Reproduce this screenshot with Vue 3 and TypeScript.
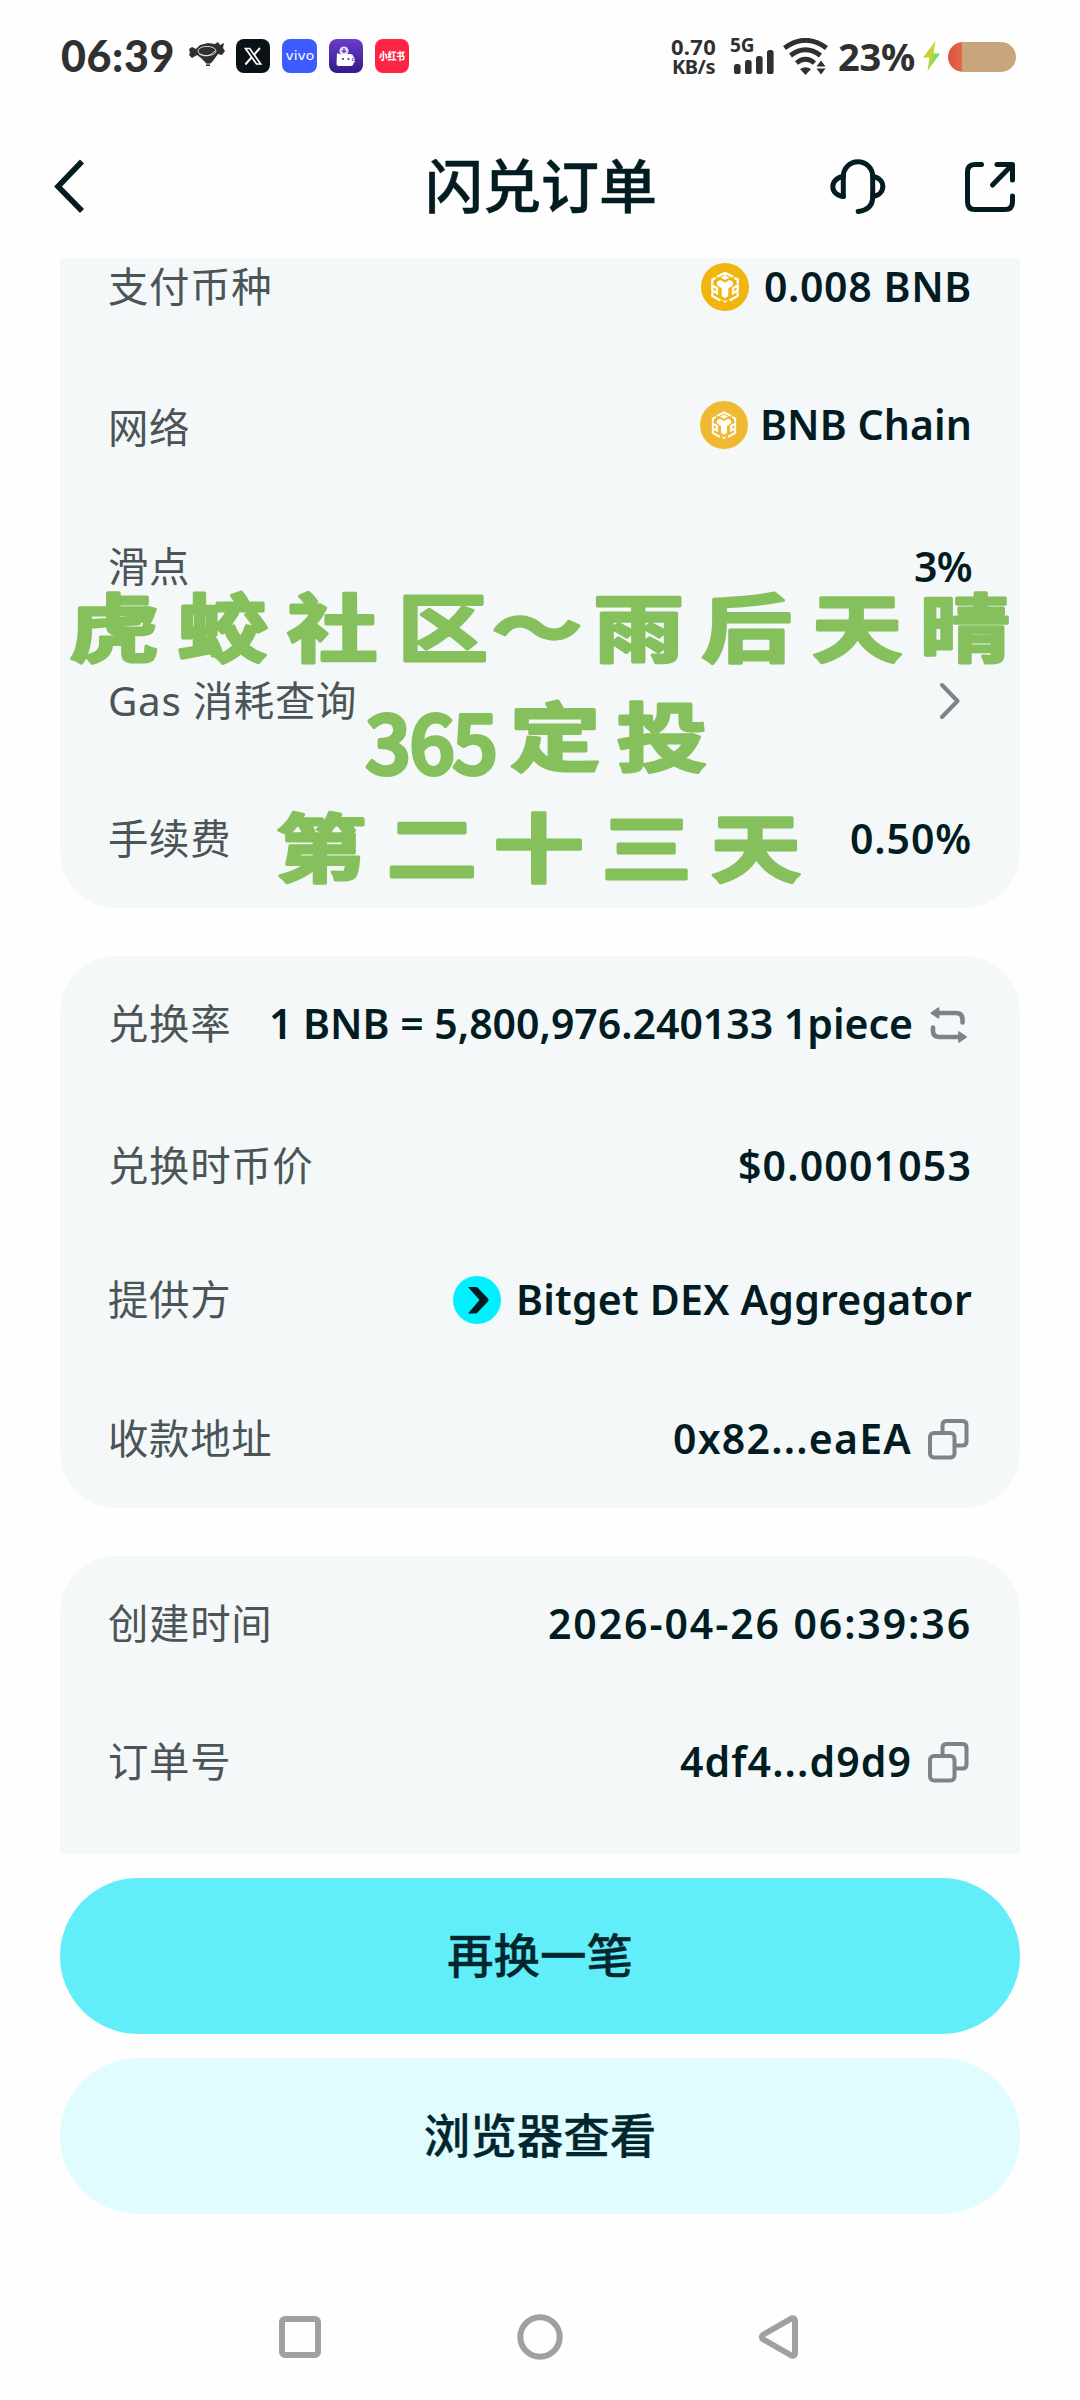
<script setup lang="ts">
import type { Directive } from 'vue'

interface Row {
  label: string
  value?: string
  width?: number
  lead?: 'bnb' | 'chain' | 'bitget'
  tail?: 'swap' | 'copy' | 'arrow'
}

const cards: Row[][] = [
  [
    { label: '支付币种', value: '0.008 BNB', width: 208, lead: 'bnb' },
    { label: '网络', value: 'BNB Chain', width: 212, lead: 'chain' },
    { label: '滑点', value: '3%', width: 58 },
    { label: 'Gas 消耗查询', tail: 'arrow' },
    { label: '手续费', value: '0.50%', width: 122 },
  ],
  [
    { label: '兑换率', value: '1 BNB = 5,800,976.240133 1piece', width: 644, tail: 'swap' },
    { label: '兑换时币价', value: '$0.0001053', width: 234 },
    { label: '提供方', value: 'Bitget DEX Aggregator', width: 456, lead: 'bitget' },
    { label: '收款地址', value: '0x82...eaEA', width: 239, tail: 'copy' },
  ],
  [
    { label: '创建时间', value: '2026-04-26 06:39:36', width: 424 },
    { label: '订单号', value: '4df4...d9d9', width: 232, tail: 'copy' },
  ],
]

// Tracks a text run so that its advance equals the given width.
const vTrack: Directive<HTMLElement, number | undefined> = {
  mounted(el, { value }) {
    if (!value) return
    const count = (el.textContent ?? '').trim().length
    const natural = el.getBoundingClientRect().width
    el.style.letterSpacing = `${((value - natural) / count).toFixed(3)}px`
  },
}

const bars = [
  { x: 0, h: 10 },
  { x: 11, h: 14 },
  { x: 22, h: 18 },
  { x: 33, h: 24 },
]
</script>

<template>
  <div class="screen">
    <header class="status">
      <span v-track="114" class="clock">06:39</span>
      <svg class="bird" width="36" height="28" viewBox="0 0 36 28">
        <path d="M0 7l3-2 4 2 4-4 8-2 7 1 3-2 2 3 4-2-1 5 2 3-3 4-4-1-5 7-3 3v2h-4v-3l-5-5-4-3-5 3-3-3 1-2z" fill="#303030" />
        <ellipse cx="18" cy="9" rx="9" ry="4.600" fill="none" stroke="#fefefe" stroke-width=".8" />
        <path d="M10 12q9 5 16-3M17 22h5" fill="none" stroke="#fefefe" stroke-width=".8" />
      </svg>
      <div class="app x-app">
        <svg width="34" height="34" viewBox="0 0 34 34" fill="none" stroke="#fff">
          <path d="M9.500 9.500h4.200l11 15.500h-4.200z" stroke-width="1.700" />
          <path d="M24 9L18 15.800M15.500 18.500L9.300 25.500" stroke-width="1.900" />
        </svg>
      </div>
      <div class="app vivo"><span>vivo</span></div>
      <div class="app wallet">
        <svg width="34" height="34" viewBox="0 0 34 34">
          <circle cx="15" cy="12" r="4.600" fill="#e4d8ff" />
          <path d="M15 9v4m-2-1.500l2 2 2-2" fill="none" stroke="#5a35b4" stroke-width="1.200" />
          <path d="M8 14q2 1.500 5 1h8q3 0 3.500 3l1.500 1v4l-1.500 1q0 3-3 3H9.500q-2 0-2-2z" fill="#fff" />
          <circle cx="14" cy="20" r="1" fill="#4526a0" /><circle cx="19.500" cy="20" r="1" fill="#4526a0" />
          <circle cx="24.500" cy="20.500" r="1.300" fill="none" stroke="#4526a0" stroke-width=".8" />
        </svg>
      </div>
      <div class="app red"><span>小红书</span></div>

      <div class="rate"><span v-track="45">0.70</span><span v-track="43">KB/s</span></div>
      <div class="signal">
        <span>5G</span>
        <svg width="40" height="25" viewBox="0 0 40 25">
          <rect v-for="b in bars" :key="b.x" :x="b.x" :y="25 - b.h" width="6.600" :height="b.h" rx="2.600" fill="#303030" />
        </svg>
      </div>
      <svg class="wifi" width="46" height="37" viewBox="0 0 46 37">
        <g fill="none" stroke="#303030" stroke-width="4.800">
          <path d="M1.500 10Q22.500-5.500 43.500 10" />
          <path d="M7.500 17.500Q22.500 6 37.500 17.500" />
          <path d="M13.500 25Q22.500 17.500 31.500 25" />
        </g>
        <path d="M17 31q5.500-3.600 11 0l-5.500 6zM33.500 28.500l4.500-6 4.500 6zM33.500 30.500h9l-4.500 6z" fill="#303030" />
      </svg>
      <span v-track="77" class="percent">23%</span>
      <svg class="bolt" width="17" height="30" viewBox="0 0 17 30">
        <defs>
          <linearGradient id="bolt" x1="0" y1="0" x2="1" y2=".6">
            <stop offset="0" stop-color="#e8b23a" /><stop offset=".5" stop-color="#c9d62f" /><stop offset="1" stop-color="#3fe08a" />
          </linearGradient>
        </defs>
        <path d="M12.500 0L0 16.500h6.500L4.500 30 17 12.500h-6.500z" fill="url(#bolt)" />
      </svg>
      <div class="battery"></div>
    </header>

    <nav class="bar">
      <svg class="back" width="32" height="54" viewBox="0 0 32 54" fill="none" stroke="#021c22" stroke-width="5.600">
        <path d="M29 2.500L5 27.500 29 52" />
      </svg>
      <h1 v-track="232">闪兑订单</h1>
      <svg class="headset" width="56" height="56" viewBox="0 0 56 56" fill="none" stroke="#021c22" stroke-width="5" stroke-linecap="round" stroke-linejoin="round">
        <path d="M13.300 37.500V17.500a14.700 14.700 0 0 1 29.400 0V38q0 12.500-14.500 14.500" />
        <path d="M13.300 17.500C-.7 19.500-.7 36 13.300 37.500M42.700 17.500c13.500 2 13.500 18 0 20" />
      </svg>
      <svg class="share" width="52" height="52" viewBox="0 0 52 52" fill="none" stroke="#021c22" stroke-width="5" stroke-linecap="round" stroke-linejoin="round">
        <path d="M17.500 3.500H11Q3.500 3.500 3.500 11v30q0 7.500 7.500 7.500h30q7.500 0 7.500-7.500v-6M33 3.500h15.500V19M47.500 4.500L28.500 24" />
      </svg>
    </nav>

    <main class="content">
      <section v-for="(rows, i) in cards" :key="i" class="card" :class="`card-${i + 1}`">
        <div v-for="row in rows" :key="row.label" class="row">
          <span class="label">{{ row.label }}</span>
          <div class="value">
            <svg v-if="row.lead === 'bnb' || row.lead === 'chain'" class="coin" :class="row.lead" width="48" height="48" viewBox="0 0 48 48">
              <circle cx="24" cy="24" r="24" :fill="row.lead === 'bnb' ? '#f0b50f' : '#f0b932'" />
              <g :transform="row.lead === 'bnb' ? 'translate(24 24)' : 'translate(24 24) scale(.88)'">
                <g fill="none" stroke="#fff" stroke-width="2.300">
                  <path d="M-8-10.300L0-14.300 8-10.300M-12.700-3.500v-3.800l3.400-2M12.700-3.500v-3.800l-3.400-2" />
                  <path d="M-12.700 5.500v3.400L-4.500 13.400M12.700 5.500v3.400L4.500 13.400M-12.700-1.500l4.700 2.700v5l-4.700-2.700zM12.700-1.500l-4.700 2.700v5l4.700-2.700z" />
                </g>
                <path d="M-4.500-9.500L0-12l4.500 2.500L0-7zM-8-5l3.200-2L0-4.500 4.800-7 8-5V-1.800L3.300 1.200v8L0 11l-3.300-1.800v-8L-8-1.800zM-3.200 13L0 14l3.200-1L0 16z" fill="#fff" />
              </g>
            </svg>
            <svg v-if="row.lead === 'bitget'" class="coin bitget" width="48" height="48" viewBox="0 0 48 48">
              <circle cx="24" cy="24" r="24" fill="#00f0ff" />
              <path d="M15 11h7.500q1.500 0 2.500 1l10 10.500q1.300 1.500 0 3L25 36q-1 1.500-2.500 1.500H15L26.500 24z" fill="#021c22" />
            </svg>
            <span v-if="row.value" v-track="row.width" class="text">{{ row.value }}</span>
            <svg v-if="row.tail === 'swap'" class="swap" width="40" height="38" viewBox="0 0 40 38">
              <path d="M8 7h20q6.500 0 6.500 6.500v3M31 31H11.500Q5 31 5 25v-3.500" fill="none" stroke="#7b8486" stroke-width="4.600" stroke-linecap="round" />
              <path d="M3 6.200L10 1.500q1.400-.6 1.400 1v9q0 1.600-1.400 1L3 7.800q-1-.8 0-1.600zM38.500 30.200l-7-4.700q-1.400-.6-1.400 1v9q0 1.600 1.400 1l7-4.700q1-.8 0-1.600z" fill="#7b8486" />
            </svg>
            <svg v-if="row.tail === 'copy'" class="copy" width="41" height="41" viewBox="0 0 41 41" fill="none" stroke="#7b8486" stroke-width="4">
              <path d="M14.500 13.500V6q0-4 4-4H34.500q4 0 4 4v16.500q0 4-4 4H28" />
              <rect x="2" y="14" width="24.500" height="24.500" rx="4" />
            </svg>
            <svg v-if="row.tail === 'arrow'" class="arrow" width="20" height="38" viewBox="0 0 20 38" fill="none" stroke="#7b8486" stroke-width="4" stroke-linecap="round" stroke-linejoin="round">
              <path d="M2 3l15.500 16L2 35" />
            </svg>
          </div>
        </div>
      </section>

      <svg class="stamp" width="960" height="360" viewBox="60 550 960 360">
        <g transform="scale(1.22 1)">
          <text y="656" x="93.500 182.500 272.500 363 440 523.500 612 702.500 791">虎蛟社区～雨后天晴</text>
          <text y="765" x="455 542.500">定投</text>
          <text y="876" x="263 354 441.500 530 619.500">第二十三天</text>
        </g>
        <text y="774" class="digits" x="388 432 475">365</text>
      </svg>
    </main>

    <footer class="actions">
      <button class="primary"><span>再换一笔</span></button>
      <button class="secondary"><span>浏览器查看</span></button>
    </footer>

    <div class="system">
      <svg width="48" height="48" viewBox="0 0 48 48"><rect x="6" y="6" width="36" height="36" rx="3" /></svg>
      <svg width="48" height="48" viewBox="0 0 48 48"><circle cx="24" cy="24" r="19.700" /></svg>
      <svg width="48" height="48" viewBox="0 0 48 48"><path d="M7.500 21.500L35.500 5.500Q39 4.500 39 8v32q0 3.500-3.500 2.500L7.500 26.500q-3.500-2.500 0-5z" /></svg>
    </div>
  </div>
</template>

<style>
body {
  background: #fefefe;
}
</style>

<style scoped>
.screen {
  width: 1080px;
  height: 2400px;
  overflow: hidden;
  display: flex;
  flex-direction: column;
  background: #fefefe;
  color: #021c22;
  font-family: 'Noto Sans', 'Noto Sans CJK SC', sans-serif;
}
svg {
  display: block;
  flex: none;
}
.status {
  height: 112px;
  display: flex;
  align-items: center;
  color: #303030;
  white-space: nowrap;
}
.clock {
  margin-left: 61px;
  font: 900 43px/50px Lato, sans-serif;
}
.bird {
  margin-left: 14px;
}
.app {
  width: 34px;
  height: 34px;
  margin-left: 12px;
  border-radius: 8px;
  display: flex;
  align-items: center;
  justify-content: center;
  overflow: hidden;
  color: #fff;
}
.bird + .app {
  margin-left: 11px;
}
.x-app {
  background: #0b1216;
}
.vivo {
  width: 35px;
  background: #3d5bff;
  font: 500 11.5px/20px 'DejaVu Sans', sans-serif;
}
.vivo span {
  transform: scaleX(1.2);
}
.wallet {
  background: linear-gradient(#6a3cc8, #35198a);
}
.red {
  background: #ff2442;
  font: 900 10px/14px 'Noto Sans CJK SC', sans-serif;
}
.red span {
  transform: scaleX(0.87);
}
.rate {
  margin-left: auto;
  width: 45px;
  display: flex;
  flex-direction: column;
  align-items: center;
  font-weight: 700;
}
.rate span {
  font-size: 22px;
  line-height: 21px;
}
.rate span + span {
  font-size: 20px;
  line-height: 20px;
}
.signal {
  width: 44px;
  height: 38px;
  margin-left: 14px;
  display: flex;
  flex-direction: column;
}
.signal span {
  margin-top: 1px;
  font-size: 19px;
  font-weight: 700;
  line-height: 14px;
}
.signal svg {
  margin: -3px 0 0 4px;
}
.wifi {
  margin-left: 9px;
}
.percent {
  margin-left: 9px;
  font-size: 38px;
  font-weight: 700;
  line-height: 50px;
}
.bolt {
  margin-left: 8px;
}
.battery {
  width: 68px;
  height: 30px;
  margin: 2px 64px 0 8px;
  border-radius: 15px;
  background: linear-gradient(90deg, #dd5040 0, #e46a48 14px, #c8a57c 14px);
}
.bar {
  height: 146px;
  display: flex;
  align-items: center;
}
.back {
  margin: 2px 0 0 53px;
}
h1 {
  margin: 1px 0 0 340px;
  font: 500 58px/80px 'Noto Sans', 'Noto Sans CJK SC', sans-serif;
  -webkit-text-stroke: 0.5px #021c22;
  white-space: nowrap;
}
.headset {
  margin: 4px 0 0 auto;
}
.share {
  margin: 4px 64px 0 78px;
}
.content {
  position: relative;
  height: 1596px;
  overflow: hidden;
  padding: 0 60px;
}
.card {
  box-sizing: border-box;
  padding: 40px 48px 41px;
  border-radius: 56px;
  background: #f4f8f9;
  margin-bottom: 48px;
}
.card-1 {
  padding-top: 1px;
  border-radius: 0 0 56px 56px;
}
.card-3 {
  height: 298px;
  margin: 0;
  border-radius: 56px 56px 0 0;
}
.row {
  height: 56px;
  display: flex;
  align-items: center;
  justify-content: space-between;
}
.row + .row {
  margin-top: 82px;
}
.card-2 .row:nth-child(2),
.card-1 .row:nth-child(3) {
  margin-top: 86px;
}
.card-2 .row:nth-child(3),
.card-1 .row:nth-child(4) {
  margin-top: 78px;
}
.card-2 .row:nth-child(4) {
  margin-top: 83px;
}
.label {
  color: #4b5456;
  font-size: 40.4px;
  line-height: 56px;
  letter-spacing: 0.7px;
  white-space: nowrap;
}
.card-1 .row:nth-child(2) .label {
  margin-top: 5px;
}
.value {
  display: flex;
  align-items: center;
}
.text {
  margin-top: -3px;
  font-size: 41px;
  font-weight: 600;
  line-height: 56px;
  white-space: nowrap;
}
.coin {
  margin-right: 15px;
}
.chain {
  margin-right: 12px;
}
.swap {
  margin: 2px 4px 0 15px;
}
.copy {
  margin: 0 3px 0 16px;
}
.arrow {
  margin-right: 12px;
}
.stamp {
  position: absolute;
  left: 60px;
  top: 292px;
  fill: #85c05d;
  stroke: #85c05d;
  stroke-width: 3px;
  stroke-linejoin: round;
  text-anchor: middle;
  font: 700 74px 'Noto Sans CJK SC', sans-serif;
}
.stamp .digits {
  stroke-width: 4px;
  font: 500 80px 'Noto Sans CJK SC', sans-serif;
}
.actions {
  padding: 24px 60px 0;
  display: flex;
  flex-direction: column;
  gap: 24px;
}
button {
  height: 156px;
  padding: 0 0 3px;
  border: 0;
  border-radius: 78px;
  color: #02262e;
  font: 500 46.5px/60px 'Noto Sans', 'Noto Sans CJK SC', sans-serif;
  -webkit-text-stroke: 0.3px #02262e;
}
.primary {
  background: #62eef8;
}
.secondary {
  background: #e0fcfe;
}
.system {
  margin-top: 99px;
  display: flex;
  justify-content: center;
  gap: 192px;
  fill: none;
  stroke: #a0a0a0;
  stroke-width: 6px;
}
</style>
